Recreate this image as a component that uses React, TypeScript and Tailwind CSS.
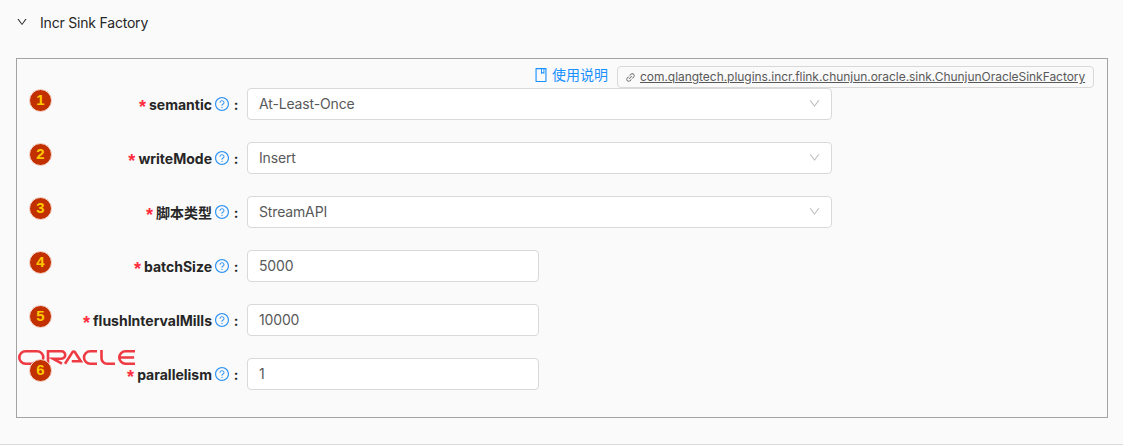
import React from "react";
import { AiOutlineBook, AiOutlineDown, AiOutlineLink, AiOutlineQuestionCircle } from "react-icons/ai";

type Field = {
  label: string;
  value: string;
  select?: boolean;
};

const fields: Field[] = [
  { label: "semantic", value: "At-Least-Once", select: true },
  { label: "writeMode", value: "Insert", select: true },
  { label: "脚本类型", value: "StreamAPI", select: true },
  { label: "batchSize", value: "5000" },
  { label: "flushIntervalMills", value: "10000" },
  { label: "parallelism", value: "1" },
];

const OracleLogo: React.FC = () => {
  return (
    <svg className="absolute left-px top-[-8px]" width="118" height="15" viewBox="0 0 118 15" fill="none" stroke="#ee3a43" strokeWidth="2.6">
      <rect x="1.3" y="1.3" width="24" height="12.4" rx="6.2" />
      <path d="M30 13.7V1.3h13.5a3.6 3.6 0 0 1 0 7.4H35l9 5" />
      <path d="M47 13.7l7.5-11.6a1.4 1.4 0 0 1 2.3 0l6 9.2h-9" />
      <path d="M79 1.3h-6.8a6.2 6.2 0 0 0 0 12.4H79" />
      <path d="M83.5 0v8.2a5.5 5.5 0 0 0 5.5 5.5h8" />
      <path d="M117 1.3h-9.5a6.2 6.2 0 0 0 0 12.4h9.5M101.6 7.5h14.5" />
    </svg>
  );
};

const FieldRow: React.FC<{ field: Field; index: number }> = ({ field, index }) => {
  return (
    <div className="relative flex items-center h-8 mb-[22px] last:mb-0">
      {index === 5 && <OracleLogo />}
      <div className="absolute left-[12px] top-px flex justify-center items-center w-[23px] h-[23px] rounded-full bg-[#c23000] border-[1.5px] border-[#f6ddd5] text-[#ffc800] text-[15px] font-bold font-['Liberation_Sans',sans-serif]">
        {index + 1}
      </div>
      <div className="flex justify-end items-center w-[222px] text-[14px] text-[#262626] font-bold">
        <span className="text-[#ff2d3d] mr-[3px] mt-[6px] leading-none text-[18px] font-bold font-['Liberation_Sans',sans-serif]">*</span>
        <span>{field.label}</span>
        <AiOutlineQuestionCircle className="ml-[2px] text-[#2f94f5]" size={16} />
        <span className="ml-[3px] w-[6px] text-center">:</span>
      </div>
      <div
        className={`ml-2 flex justify-between items-center h-8 pl-[11px] pr-[10px] pb-px bg-white border border-[#d9d9d9] rounded-[4px] text-[14px] text-[#595959] tracking-[-0.15px] ${
          field.select ? "w-[585px]" : "w-[292px]"
        }`}
      >
        <span>{field.value}</span>
        {field.select && <AiOutlineDown className="text-[#bfbfbf]" size={13} />}
      </div>
    </div>
  );
};

const App: React.FC = () => {
  return (
    <div className="w-[1123px] h-[445px] overflow-hidden bg-[#fafafa] border-b border-[#d9d9d9] font-['Inter','Noto_Sans_CJK_SC',sans-serif]">
      <div className="flex items-center h-[44px] pl-[16px] text-[14px] text-[#262626]">
        <AiOutlineDown size={12} />
        <span className="ml-3 tracking-[-0.2px]">Incr Sink Factory</span>
      </div>
      <div className="mx-4 mt-[14px] h-[360px] w-[1092px] border border-[#a3a3a3] pt-[7px]">
        <div className="flex justify-end items-center h-[22px] pr-[13px]">
          <a className="flex items-center text-[14px] leading-[18px] text-[#1890ff] mb-1">
            <AiOutlineBook size={16} />
            <span className="ml-[3px]">使用说明</span>
          </a>
          <div className="flex items-center w-[477px] h-[22px] ml-[9px] pl-[7px] bg-[#fafafa] border border-[#d9d9d9] rounded-[4px] text-[12px] text-[#595959] tracking-[-0.04px]">
            <AiOutlineLink size={11} />
            <span className="ml-1 underline">com.qlangtech.plugins.incr.flink.chunjun.oracle.sink.ChunjunOracleSinkFactory</span>
          </div>
        </div>
        <div className="relative">
          {fields.map((field, i) => (
            <FieldRow key={field.label} field={field} index={i} />
          ))}
        </div>
      </div>
    </div>
  );
};

export default App;
